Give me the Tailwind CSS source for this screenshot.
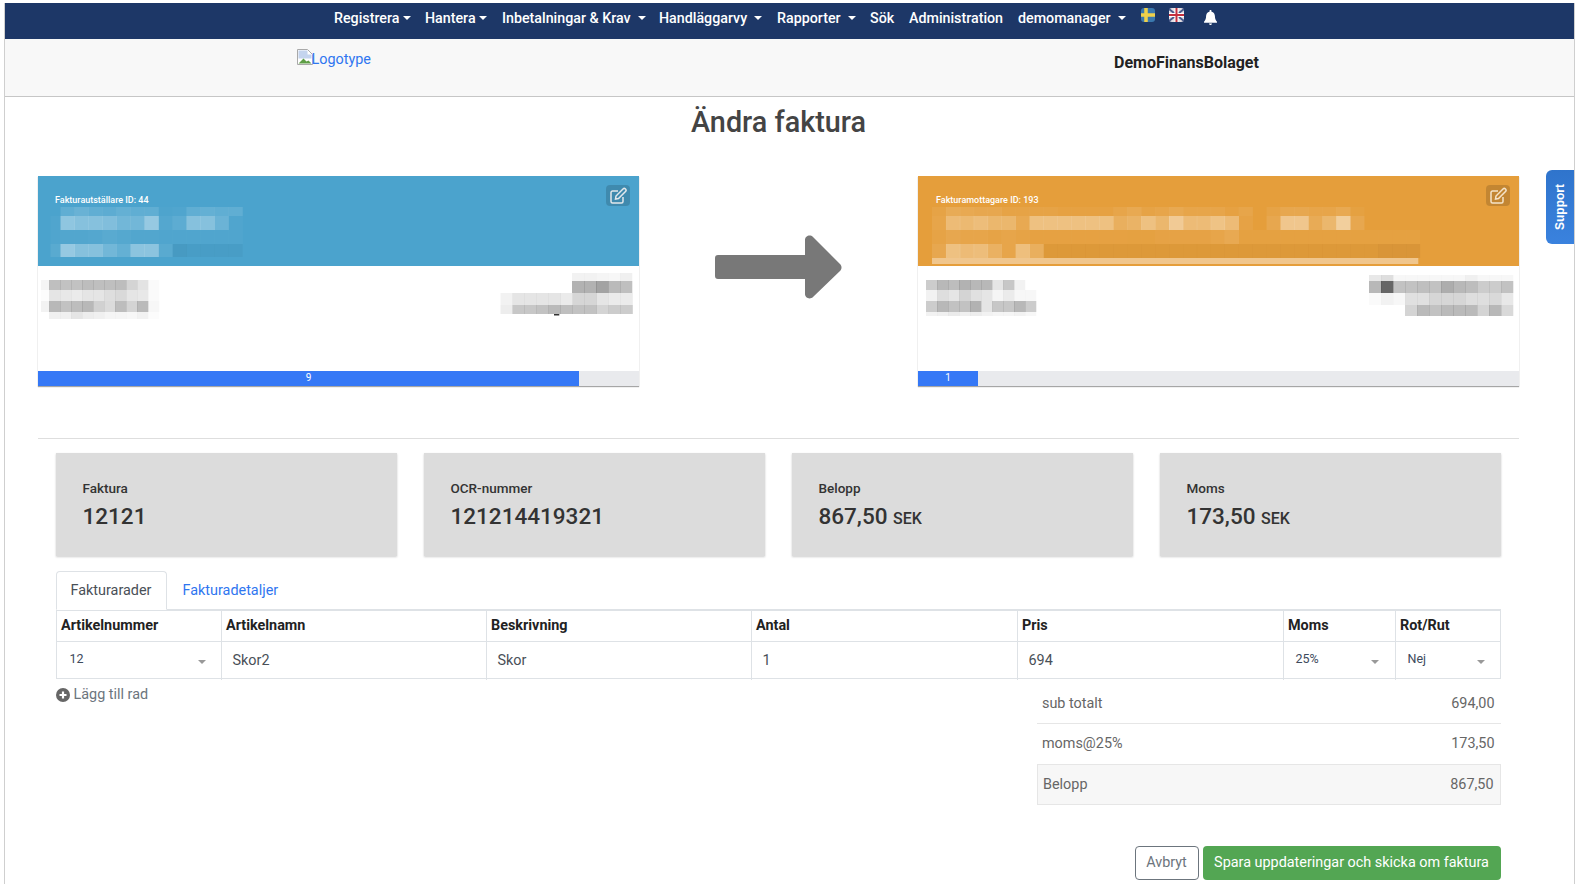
<!DOCTYPE html>
<html lang="en">
<head>
  <meta charset="UTF-8" />
  <title>Ändra faktura</title>
  <script src="https://cdn.jsdelivr.net/npm/@tailwindcss/browser@4"></script>
</head>
<body class="bg-white font-['Roboto',sans-serif] h-[884px] overflow-hidden">
  <div class="relative ml-[4px] w-[1571px] h-[884px] mt-[3px] border-x border-[#cfcfcf]">

    <!-- top menu -->
    <nav class="h-[36px] bg-[#1d3767] flex items-start pl-[329px] pt-[7px] text-white text-[14.250px] leading-[16px] font-medium">
      <a class="flex items-center w-[91px]">Registrera<i class="ml-[4px] w-0 h-0 border-x-[4px] border-t-[4px] border-x-transparent border-t-white"></i></a>
      <a class="flex items-center w-[77px]">Hantera<i class="ml-[3px] w-0 h-0 border-x-[4px] border-t-[4px] border-x-transparent border-t-white"></i></a>
      <a class="flex items-center w-[157px]">Inbetalningar &amp; Krav<i class="ml-[7px] w-0 h-0 border-x-[4px] border-t-[4px] border-x-transparent border-t-white"></i></a>
      <a class="flex items-center w-[118px]">Handläggarvy<i class="ml-[7px] w-0 h-0 border-x-[4px] border-t-[4px] border-x-transparent border-t-white"></i></a>
      <a class="flex items-center w-[93px]">Rapporter<i class="ml-[7px] w-0 h-0 border-x-[4px] border-t-[4px] border-x-transparent border-t-white"></i></a>
      <a class="w-[39px]">Sök</a>
      <a class="w-[109px]">Administration</a>
      <a class="flex items-center w-[123px]">demomanager<i class="ml-[7px] w-0 h-0 border-x-[4px] border-t-[4px] border-x-transparent border-t-white"></i></a>
      <svg class="mt-[-2px]" width="14" height="14" viewBox="0 0 14 14"><rect width="14" height="14" rx="3" fill="#3a78ae"/><path d="M0 7h14M5 0v14" stroke="#efd04a" stroke-width="3.5"/></svg>
      <svg class="ml-[14px] mt-[-2px]" width="15" height="14" viewBox="0 0 15 14"><rect width="15" height="14" rx="3" fill="#e4dfe4"/><path d="M0 1l15 12M15 1L0 13" stroke="#4a5a8c" stroke-width="2"/><path d="M0 7h15M7.5 0v14" stroke="#fff" stroke-width="4"/><path d="M0 7h15M7.5 0v14" stroke="#c5303f" stroke-width="2"/></svg>
      <svg class="ml-[20px] mt-[0px]" width="13" height="15" viewBox="0 0 13 15"><path d="M6.5 0c.6 0 1 .4 1 1v.7c2.2.4 3.4 2.3 3.4 4.4 0 3.3 1 4.4 2.1 5.6.3.4 0 1-.5 1H.5c-.5 0-.8-.6-.5-1 1.100-1.200 2.100-2.300 2.100-5.600 0-2.100 1.200-4 3.400-4.400V1c0-.6.4-1 1-1zM5 13.500h3c0 .9-.7 1.500-1.500 1.500S5 14.400 5 13.500z" fill="#fff"/></svg>
    </nav>

    <!-- company header -->
    <header class="h-[58px] bg-[#f8f8f8] border-b border-[#c6c6c6] flex items-start">
      <a class="ml-[292px] mt-[11px] flex w-[76px] text-[14.400px] leading-[20px] text-[#2f76f0]">
        <svg class="mt-[-1px] shrink-0" width="16" height="16" viewBox="0 0 16 16"><path d="M.5.5h10l5 5v10H.5z" fill="#fff" stroke="#a9a9a9"/><path d="M1.500 1.500h9v4h4v4l-13 0z" fill="#c4d4ee"/><path d="M1.500 14.500l5-5 3 3 2-1 3 3z" fill="#5f9e46"/></svg>
        <span class="ml-[-1.500px]">Logotype</span>
      </a>
      <div class="ml-[741px] mt-[15px] text-[16px] leading-[18px] font-bold text-[#222]">DemoFinansBolaget</div>
    </header>

    <main class="pl-[33px] pr-[55px]">
      <h1 class="text-center pt-[6px] text-[28.800px] leading-[38px] font-medium text-[#444]">Ändra faktura</h1>

      <!-- sender / receiver -->
      <section class="mt-[35px] flex items-start justify-between h-[210px]">
        <div class="w-[601px] h-[210px] flex flex-col shadow-[0_1px_1px_rgba(0,0,0,0.35)]">
          <div class="relative h-[90px] bg-[#4ba3cd] text-white">
            <svg id="m1" class="absolute left-0 top-0" width="601" height="90"></svg>
            <p class="absolute left-[17px] top-[19px] text-[9px] leading-[11px] font-medium">Fakturautställare ID: 44</p>
            <button class="absolute right-[9px] top-[9px] w-[24px] h-[21px] rounded bg-black/15 flex items-center justify-center">
              <svg width="17" height="17" viewBox="0 0 17 17" fill="none" stroke="#e2e8ec" stroke-width="1.500"><path d="M13 10v4.500a1.500 1.500 0 0 1-1.500 1.500h-9A1.500 1.500 0 0 1 1 14.500v-9A1.500 1.500 0 0 1 2.500 4H8"/><path d="M6 9l-.5 3 3-.5 7-7a1.500 1.500 0 0 0-2.500-2.500z"/></svg>
            </button>
          </div>
          <div class="relative flex-1 bg-white">
            <svg id="m2" class="absolute left-0 top-0" width="601" height="105"></svg>
          </div>
          <div class="h-[15px] bg-[#e9eaed] flex">
            <div class="w-[541px] bg-[#3578f6] text-white text-[10px] leading-[14px] text-center">9</div>
          </div>
        </div>

        <svg class="mt-[59px]" width="127" height="64" viewBox="0 0 127 64"><path d="M3 20h87V5c0-4 5-6 8-3l27 27c2 2 2 5 0 7L98 62c-3 3-8 1-8-3V44H3c-2 0-3-1-3-3V23c0-2 1-3 3-3z" fill="#787878"/></svg>

        <div class="w-[601px] h-[210px] flex flex-col shadow-[0_1px_1px_rgba(0,0,0,0.35)]">
          <div class="relative h-[90px] bg-[#e59e3b] text-white">
            <svg id="m3" class="absolute left-0 top-0" width="601" height="90"></svg>
            <p class="absolute left-[18px] top-[19px] text-[9px] leading-[11px] font-medium">Fakturamottagare ID: 193</p>
            <button class="absolute right-[9px] top-[9px] w-[24px] h-[21px] rounded bg-black/15 flex items-center justify-center">
              <svg width="17" height="17" viewBox="0 0 17 17" fill="none" stroke="#f5e3c8" stroke-width="1.500"><path d="M13 10v4.500a1.500 1.500 0 0 1-1.500 1.500h-9A1.500 1.500 0 0 1 1 14.500v-9A1.500 1.500 0 0 1 2.500 4H8"/><path d="M6 9l-.5 3 3-.5 7-7a1.500 1.500 0 0 0-2.500-2.500z"/></svg>
            </button>
          </div>
          <div class="relative flex-1 bg-white">
            <svg id="m4" class="absolute left-0 top-0" width="601" height="105"></svg>
          </div>
          <div class="h-[15px] bg-[#e9eaed] flex">
            <div class="w-[60px] bg-[#3578f6] text-white text-[10px] leading-[14px] text-center">1</div>
          </div>
        </div>
      </section>

      <hr class="mt-[52px] border-[#dedede]" />

      <div class="pl-[17.500px] mr-[-0.500px]">
        <!-- summary boxes -->
        <section class="mt-[14px] grid grid-cols-4 gap-x-[27px] mr-[19px]">
          <div class="h-[103px] bg-[#dcdcdc] shadow-[0_1px_2px_rgba(0,0,0,0.2)] pl-[27px] pt-[27px] text-[#333] font-medium">
            <p class="text-[13.500px] leading-[16px]">Faktura</p>
            <p class="mt-[6px] text-[22.500px] leading-[28px]">12121</p>
          </div>
          <div class="h-[103px] bg-[#dcdcdc] shadow-[0_1px_2px_rgba(0,0,0,0.2)] pl-[27px] pt-[27px] text-[#333] font-medium">
            <p class="text-[13.500px] leading-[16px]">OCR-nummer</p>
            <p class="mt-[6px] text-[22.500px] leading-[28px]">121214419321</p>
          </div>
          <div class="h-[103px] bg-[#dcdcdc] shadow-[0_1px_2px_rgba(0,0,0,0.2)] pl-[27px] pt-[27px] text-[#333] font-medium">
            <p class="text-[13.500px] leading-[16px]">Belopp</p>
            <p class="mt-[6px] text-[22.500px] leading-[28px]">867,50 <span class="text-[16px]">SEK</span></p>
          </div>
          <div class="h-[103px] bg-[#dcdcdc] shadow-[0_1px_2px_rgba(0,0,0,0.2)] pl-[27px] pt-[27px] text-[#333] font-medium">
            <p class="text-[13.500px] leading-[16px]">Moms</p>
            <p class="mt-[6px] text-[22.500px] leading-[28px]">173,50 <span class="text-[16px]">SEK</span></p>
          </div>
        </section>

        <!-- tabs -->
        <div class="mt-[15px] flex h-[38px] text-[14.400px]">
          <a class="w-[111px] h-[39px] z-10 bg-white border border-[#dee2e6] border-b-white rounded-t pt-[10px] text-center leading-[18px] text-[#495057]">Fakturarader</a>
          <a class="ml-[16px] pt-[11px] leading-[18px] text-[#2f76f0]">Fakturadetaljer</a>
        </div>

        <!-- invoice rows -->
        <div class="w-[1445px] border-t-2 border-x border-b border-[#dee2e6] text-[14.400px]">
          <div class="grid grid-cols-[164px_265px_265px_266px_266px_112px_105px] h-[31px] border-b border-[#dee2e6] font-bold text-[#222] leading-[29px]">
            <div class="pl-[4.500px]">Artikelnummer</div>
            <div class="pl-[4.500px] border-l border-[#dee2e6]">Artikelnamn</div>
            <div class="pl-[4.500px] border-l border-[#dee2e6]">Beskrivning</div>
            <div class="pl-[4.500px] border-l border-[#dee2e6]">Antal</div>
            <div class="pl-[4.500px] border-l border-[#dee2e6]">Pris</div>
            <div class="pl-[4.500px] border-l border-[#dee2e6]">Moms</div>
            <div class="pl-[4.500px] border-l border-[#dee2e6]">Rot/Rut</div>
          </div>
          <div class="grid grid-cols-[164px_265px_265px_266px_266px_112px_105px] h-[36px] text-[#495057] leading-[38px]">
            <div class="relative pl-[13px] text-[12.500px] leading-[34px] text-[#3d4a5c]">12<i class="absolute right-[15px] top-[18px] w-0 h-0 border-x-[4px] border-t-[4px] border-x-transparent border-t-[#999]"></i></div>
            <div class="pl-[11px] border-l border-[#dee2e6]">Skor2</div>
            <div class="pl-[11px] border-l border-[#dee2e6]">Skor</div>
            <div class="pl-[11px] border-l border-[#dee2e6]">1</div>
            <div class="pl-[11px] border-l border-[#dee2e6]">694</div>
            <div class="relative pl-[12px] border-l border-[#dee2e6] text-[12.500px] leading-[34px] text-[#3d4a5c]">25%<i class="absolute right-[16px] top-[18px] w-0 h-0 border-x-[4px] border-t-[4px] border-x-transparent border-t-[#999]"></i></div>
            <div class="relative pl-[12px] border-l border-[#dee2e6] text-[12.500px] leading-[34px] text-[#3d4a5c]">Nej<i class="absolute right-[15px] top-[18px] w-0 h-0 border-x-[4px] border-t-[4px] border-x-transparent border-t-[#999]"></i></div>
          </div>
        </div>

        <div class="flex justify-between w-[1445px]">
          <a class="mt-[7px] flex items-center h-[18px] text-[14.400px] text-[#6c757d]">
            <svg width="14" height="14" viewBox="0 0 14 14"><circle cx="7" cy="7" r="7" fill="#666"/><path d="M7 3.500v7M3.500 7h7" stroke="#fff" stroke-width="2.200"/></svg>
            <span class="ml-[4px]">Lägg till rad</span>
          </a>

          <!-- totals -->
          <div class="w-[464px] text-[14.400px] text-[#666]">
            <div class="h-[45px] border-b border-[#e6e6e6] flex justify-between items-center pl-[5.500px] pr-[6px] pt-[5px]"><span>sub totalt</span><span>694,00</span></div>
            <div class="h-[40px] flex justify-between items-center pl-[5.500px] pr-[6px]"><span>moms@25%</span><span>173,50</span></div>
            <div class="h-[41px] bg-[#f7f7f7] border border-[#e6e6e6] flex justify-between items-center pl-[5.500px] pr-[6px]"><span>Belopp</span><span>867,50</span></div>
          </div>
        </div>

        <div class="w-[1445px] mt-[41px] flex justify-end text-[14.400px]">
          <button class="w-[64px] h-[34px] rounded border border-[#6c757d] text-[#6c757d] bg-white">Avbryt</button>
          <button class="ml-[4px] w-[298px] h-[34px] rounded bg-[#53a653] text-white">Spara uppdateringar och skicka om faktura</button>
        </div>
      </div>
    </main>

    <!-- support tab -->
    <a class="absolute right-0 top-[167px] w-[28px] h-[74px] bg-gradient-to-b from-[#3a82de] to-[#2f74cc] text-white font-['Liberation_Sans',sans-serif] text-[12px] font-bold flex items-center justify-center [writing-mode:vertical-rl] rotate-180 rounded-r-md">Support</a>
  </div>

  <script>
    // Censored text blocks of the reference, each row: [y, height, startX, cellWidth, values]
    // positive value = white at that opacity, negative = black
    function mosaic(id, rows) {
      const svg = document.getElementById(id);
      rows.forEach(([y, h, x0, w, vals]) => {
        vals.forEach((v, i) => {
          if (!v) return;
          const r = document.createElementNS('http://www.w3.org/2000/svg', 'rect');
          r.setAttribute('x', x0 + i * w);
          r.setAttribute('y', y);
          r.setAttribute('width', w + 0.3);
          r.setAttribute('height', h);
          r.setAttribute('fill', v > 0 ? '#fff' : '#000');
          r.setAttribute('fill-opacity', Math.abs(v));
          svg.appendChild(r);
        });
      });
    }

    // sender header
    mosaic('m1', [
      [31, 9, 22.500, 14, [.12, .17, .12, .1, .14, .12, .12, .02, .03, .12, .14, .12, .12]],
      [40, 14, 22.500, 14, [.38, .33, .33, .3, .22, .22, .42, .05, .1, .33, .33, .18, .03]],
      [54, 14, 22.500, 14, [.04, .04, .05, .08, .06, .04, .04, .03, .03, .03, .03, .03, .03]],
      [68, 13, 22.500, 14, [.42, .33, .33, .22, .14, .36, .36, .08, -.05, -.03, -.03, -.03, -.03]],
      [40, 28, 12.500, 10, [.03]],
      [68, 13, 12.500, 10, [.08]],
    ]);
    // sender body, svg starts at y 266
    mosaic('m2', [
      [14, 10, 3, 8, [-.04]],
      [24, 11, 3, 8, [-.01]],
      [35, 11, 3, 8, [-.05]],
      [14, 10, 11, 11, [-.25, -.24, -.24, -.26, -.25, -.25, -.26, -.17, -.11, -.02]],
      [24, 11, 11, 11, [-.1, -.09, -.08, -.1, -.1, -.13, -.15, -.1, -.09, -.02]],
      [35, 11, 11, 11, [-.28, -.24, -.26, -.28, -.18, -.14, -.26, -.17, -.27, -.03]],
      [46, 7, 11, 11, [-.06, -.06, -.1, -.07, -.06, -.04, -.04, -.03, -.05, -.01]],
      [7, 8, 534, 12, [-.05, -.05, -.04, -.03, -.06]],
      [15, 12, 534, 12, [-.3, -.3, -.36, -.27, -.25]],
      [27, 12, 462.500, 12, [-.05, -.1, -.1, -.1, -.1, -.08, -.16, -.16, -.1, -.08, -.08]],
      [39, 9, 462.500, 12, [-.07, -.22, -.22, -.24, -.27, -.25, -.24, -.24, -.17, -.2, -.2]],
      [48, 1.500, 516, 5, [-.8]],
    ]);
    // receiver header
    const rowB = [.08, .3, .28, .32, .26, .26, .12, .36, .36, .36, .36, .36, .36, .18, .22, .36, .26, .46, .3, .3, .38, .3, .05, 0, .1, .42, .42, .14, .26, .5, .1];
    mosaic('m3', [
      [31, 9, 14, 13.940, [.06, .14, .12, .1, .1, .06, .06, .06, .06, .04, .04, .04, .04, .08, .12, .06, .08, .12, .08, .08, .08, .04, .08, 0, .06, .1, .1, .08, .08, .12, .03]],
      [40, 14, 14, 13.940, rowB],
      [54, 14, 14, 13.940, [.06, .1, .08, .08, .06, .08, .06, .04, .04, .04, .04, .04, .04, .04, .03, .03, .05, .05, .05, .05, .08, .12, .03, .03, .03, .03, .03, .03, .03, .03, .03, .03, .03, .03, .03]],
      [68, 14, 14, 13.940, [.1, .36, .3, .32, .2, .08, .34, .18, -.03, -.03, -.03, -.03, -.03, -.03, -.03, -.03, -.03, -.03, -.03, -.03, -.03, -.03, -.03, -.03, -.03, -.03, -.03, -.03, -.03, -.03, -.03, -.03, -.05, -.05, -.05]],
      [82, 6, 14, 486, [.42]],
    ]);
    // receiver body
    mosaic('m4', [
      [14, 10, 8, 11, [-.2, -.28, -.26, -.3, -.28, -.28, -.1, -.22, -.05]],
      [24, 11, 8, 11, [-.05, -.13, -.1, -.17, -.12, -.1, -.04, -.08, -.03, -.03]],
      [35, 11, 8, 11, [-.2, -.28, -.24, -.24, -.3, -.1, -.22, -.22, -.28, -.2]],
      [46, 4, 8, 11, [-.05, -.06, -.08, -.06, -.07, -.05, -.04, -.04, -.05, -.03]],
      [9, 6, 451, 12, [-.09, -.13, -.03, -.03, -.03, -.03, -.03, -.03, -.06, -.03, -.03, -.03]],
      [15, 12, 451, 12, [-.28, -.6, -.24, -.24, -.25, -.24, -.32, -.28, -.26, -.2, -.2, -.24]],
      [27, 12, 451, 12, [-.02, -.05, -.03, -.12, -.12, -.16, -.16, -.16, -.13, -.13, -.15, -.09]],
      [39, 11, 487, 12, [-.17, -.27, -.24, -.27, -.27, -.27, -.17, -.28, -.15]],
    ]);
  </script>
</body>
</html>
